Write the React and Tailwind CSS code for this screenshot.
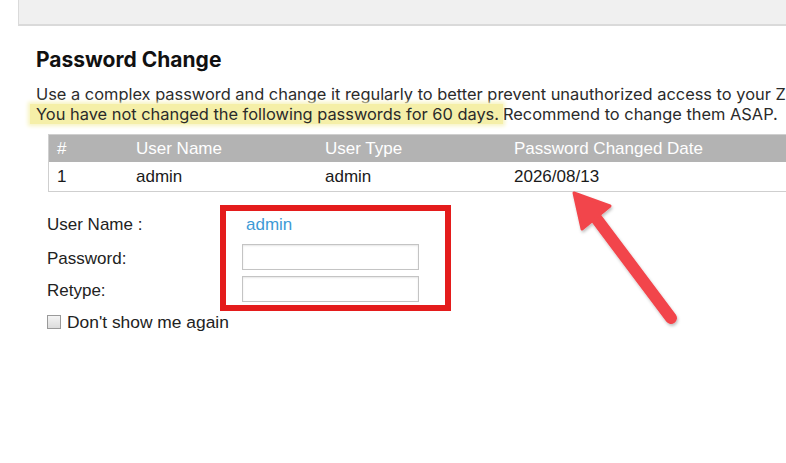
export default function App() {
  const cols = ['#', 'User Name', 'User Type', 'Password Changed Date'];
  const row = ['1', 'admin', 'admin', '2026/08/13'];
  const widths = ['w-[79px]', 'w-[189px]', 'w-[189px]', 'flex-1'];

  return (
    <div className="relative w-[786px] h-[463px] overflow-hidden bg-white">
      {/* top bar */}
      <div className="ml-[18px] h-[26px] w-[800px] bg-[#f0f0f0] border-b-2 border-l border-[#dadada]" />

      <div className="pl-9">
        <h1 className="mt-5 text-[21px] leading-7 font-bold text-[#111] font-['Inter',sans-serif]">
          Password Change
        </h1>
        <div className="mt-[10px] w-[820px] text-[16.4px] leading-5 text-[#2a2a2a] font-['Inter',sans-serif] whitespace-nowrap">
          <p>Use a complex password and change it regularly to better prevent unauthorized access to your Z</p>
          <p>
            <span className="-ml-1.5 pl-1.5 pr-1 bg-[#f5efa8] shadow-[0_0_4px_2px_#f7f3c0]">
              You have not changed the following passwords for 60 days.
            </span>
            Recommend to change them ASAP.
          </p>
        </div>

        {/* table */}
        <div className="mt-2.5 ml-3 w-[800px] border border-[#cfcfcf] font-['Liberation_Sans',Arial,sans-serif] text-[17px]">
          <div className="flex h-[27px] items-center bg-[#b3b3b3] text-white">
            {cols.map((c, i) => (
              <div key={c} className={`${widths[i]} pl-2`}>{c}</div>
            ))}
          </div>
          <div className="flex h-[29px] items-center text-[#1a1a1a]">
            {row.map((c, i) => (
              <div key={i} className={`${widths[i]} pl-2`}>{c}</div>
            ))}
          </div>
        </div>

        {/* form */}
        <div className="mt-5 ml-[11px] grid grid-cols-[195px_177px] gap-y-1.5 font-['Liberation_Sans',Arial,sans-serif] text-[17px] text-[#222]">
          <div className="h-[26px] flex items-center">User Name :</div>
          <div className="h-[26px] flex items-center pl-1 text-[#3d9ad6]">admin</div>
          <div className="h-[26px] flex items-center pt-1">Password:</div>
          <input type="password" className="h-[26px] w-[177px] border border-[#c4c4c4] bg-white shadow-[inset_0_1px_2px_#e6e6e6] outline-none" />
          <div className="h-[26px] flex items-center pt-1">Retype:</div>
          <input type="password" className="h-[26px] w-[177px] border border-[#c4c4c4] bg-white shadow-[inset_0_1px_2px_#e6e6e6] outline-none" />
          <label className="col-span-2 mt-0.5 h-6 flex items-center gap-1.5 text-[17.4px]">
            <span className="w-[14px] h-[14px] border border-[#9a9a9a] bg-gradient-to-b from-[#f4f4f4] to-[#dcdcdc]" />
            Don't show me again
          </label>
        </div>
      </div>

      {/* annotation: red box */}
      <div className="absolute left-[220px] top-[205px] w-[231px] h-[106px] border-[6px] border-[#e41c1c] pointer-events-none" />

      {/* annotation: arrow */}
      <svg className="absolute left-0 top-0 pointer-events-none" width="786" height="463" viewBox="0 0 786 463">
        <defs>
          <filter id="sh" x="-20%" y="-20%" width="140%" height="140%">
            <feDropShadow dx="1" dy="2" stdDeviation="1.5" floodColor="#000" floodOpacity="0.25" />
          </filter>
        </defs>
        <g filter="url(#sh)" fill="#f2454b" stroke="#f2454b" strokeLinejoin="round" strokeLinecap="round">
          <line x1="596" y1="218" x2="671" y2="318" strokeWidth="12" />
          <polygon points="574,193 610,206 582,229" strokeWidth="3" />
        </g>
      </svg>
    </div>
  );
}
